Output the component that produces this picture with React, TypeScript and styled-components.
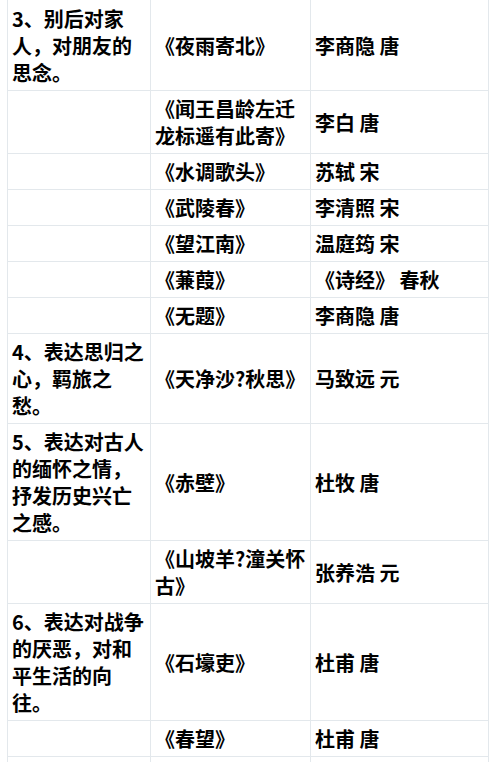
import React from "react";
import styled, { createGlobalStyle } from "styled-components";

const GlobalStyle = createGlobalStyle`
  html, body {
    margin: 0;
    padding: 0;
    background: #ffffff;
  }
  body {
    font-family: "Noto Sans CJK SC", "Noto Sans", sans-serif;
    color: #000000;
    overflow: hidden;
  }
`;

type Poem = {
  theme?: string[];
  title: string[];
  author: string;
};

const poems: Poem[] = [
  { theme: ["3、别后对家", "人，对朋友的", "思念。"], title: ["《夜雨寄北》"], author: "李商隐 唐" },
  { title: ["《闻王昌龄左迁", "龙标遥有此寄》"], author: "李白 唐" },
  { title: ["《水调歌头》"], author: "苏轼 宋" },
  { title: ["《武陵春》"], author: "李清照 宋" },
  { title: ["《望江南》"], author: "温庭筠 宋" },
  { title: ["《蒹葭》"], author: "《诗经》 春秋" },
  { title: ["《无题》"], author: "李商隐 唐" },
  { theme: ["4、表达思归之", "心，羁旅之", "愁。"], title: ["《天净沙?秋思》"], author: "马致远 元" },
  { theme: ["5、表达对古人", "的缅怀之情，", "抒发历史兴亡", "之感。"], title: ["《赤壁》"], author: "杜牧 唐" },
  { title: ["《山坡羊?潼关怀", "古》"], author: "张养浩 元" },
  { theme: ["6、表达对战争", "的厌恶，对和", "平生活的向", "往。"], title: ["《石壕吏》"], author: "杜甫 唐" },
  { title: ["《春望》"], author: "杜甫 唐" },
  { title: ["\u00a0"], author: "\u00a0" },
];

const Page = styled.div`
  padding-left: 7px;
`;

const Table = styled.table`
  border-collapse: collapse;
  table-layout: fixed;
  width: 482px;

  tr:first-child td {
    border-top-color: transparent;
  }
`;

const Cell = styled.td`
  border: 1px solid #e3e8ec;
  padding: 4px 4px;
  vertical-align: middle;
  font-size: 20px;
  line-height: 27px;
  font-weight: 700;
  white-space: nowrap;
`;

const Line = styled.div`
  display: block;
`;

function Lines({ items }: { items: string[] }) {
  return (
    <>
      {items.map((t, i) => (
        <Line key={i}>{t}</Line>
      ))}
    </>
  );
}

export default function App() {
  return (
    <Page>
      <GlobalStyle />
      <Table>
        <colgroup>
          <col style={{ width: 143 }} />
          <col style={{ width: 160 }} />
          <col style={{ width: 178 }} />
        </colgroup>
        <tbody>
          {poems.map((p, i) => (
            <tr key={i}>
              <Cell>{p.theme ? <Lines items={p.theme} /> : null}</Cell>
              <Cell>
                <Lines items={p.title} />
              </Cell>
              <Cell>{p.author}</Cell>
            </tr>
          ))}
        </tbody>
      </Table>
    </Page>
  );
}
